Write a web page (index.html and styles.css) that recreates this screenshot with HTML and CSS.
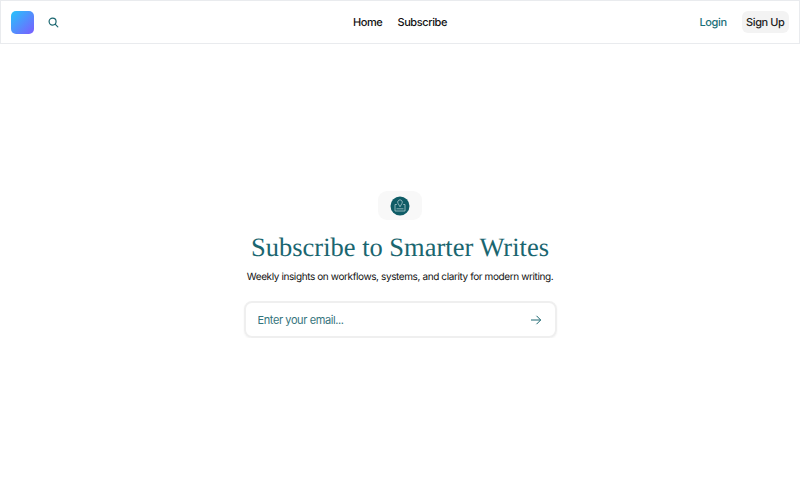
FILE: index.html
```html
<!DOCTYPE html>
<html lang="en">
  <head>
    <meta charset="UTF-8" />
    <meta name="viewport" content="width=device-width, initial-scale=1.0" />
    <title>Subscribe to Smarter Writes</title>
    <link rel="stylesheet" href="styles.css">
  </head>
  <body>
    <header class="navbar">
      <div class="nav-left">
        <a class="logo" href="#" aria-label="Home"></a>
        <button class="search-btn" type="button" aria-label="Search">
          <svg width="11" height="11" viewBox="0 0 12 12" fill="none" stroke="currentColor" stroke-width="1.3" stroke-linecap="round">
            <circle cx="5" cy="5" r="3.8" />
            <path d="M8 8l2.700 2.700" />
          </svg>
        </button>
      </div>
      <nav class="nav-links">
        <a href="#">Home</a>
        <a href="#">Subscribe</a>
      </nav>
      <div class="nav-right">
        <a class="login" href="#">Login</a>
        <a class="signup" href="#">Sign Up</a>
      </div>
    </header>

    <main class="hero">
      <div class="badge">
        <svg width="20" height="20" viewBox="0 0 20 20" fill="none" stroke="#a9c8cc" stroke-width="0.8">
          <circle cx="10" cy="10" r="9.5" fill="#0f5c66" stroke="none" />
          <path d="M6.800 8.500H5v6.500h10V8.500h-1.800" />
          <path d="M10 10.800 8 7.300a2.300 2.300 0 1 1 4 0z" />
          <path d="M6.500 12.800h7" />
        </svg>
      </div>
      <h1>Subscribe to Smarter Writes</h1>
      <p class="subtitle">Weekly insights on workflows, systems, and clarity for modern writing.</p>
      <form class="subscribe-form">
        <input type="email" placeholder="Enter your email..." />
        <button type="submit" aria-label="Subscribe">
          <svg width="12" height="12" viewBox="0 0 12 12" fill="none" stroke="currentColor" stroke-width="1">
            <path d="M1 6h9.500M6.500 1.800 10.700 6l-4.200 4.200" />
          </svg>
        </button>
      </form>
    </main>
  </body>
</html>
```

FILE: styles.css
```css
* {
  box-sizing: border-box;
}
body {
  margin: 0;
  font-family: Inter, sans-serif;
  background-color: #fff;
  text-rendering: geometricPrecision;
}
a {
  text-decoration: none;
}
.navbar {
  height: 44px;
  padding: 0 10px;
  border: 1px solid #e9ebee;
  display: grid;
  grid-template-columns: 1fr auto 1fr;
  align-items: center;
}
.nav-left {
  display: flex;
  align-items: center;
  gap: 14px;
}
.logo {
  width: 23px;
  height: 23px;
  border-radius: 5px;
  background: linear-gradient(135deg, #25c4fb, #7c5cff);
}
.search-btn {
  padding: 0;
  border: none;
  background: none;
  color: #1a6670;
  display: flex;
}
.nav-links {
  display: flex;
  gap: 15px;
}
.nav-links a {
  color: #111;
  font-size: 11px;
  font-weight: 500;
  letter-spacing: -0.4px;
}
.nav-right {
  display: flex;
  justify-content: flex-end;
  align-items: center;
  gap: 15px;
}
.login {
  color: #1a6f79;
  font-size: 11px;
  font-weight: 500;
  letter-spacing: -0.4px;
}
.signup {
  padding: 4px 4.500px;
  border-radius: 6px;
  background-color: #f3f3f3;
  color: #222;
  font-size: 11px;
  font-weight: 500;
  letter-spacing: -0.4px;
}
.hero {
  display: flex;
  flex-direction: column;
  align-items: center;
  padding-top: 147px;
}
.badge {
  width: 44px;
  height: 29px;
  border-radius: 9px;
  background-color: #f8f8f8;
  display: flex;
  align-items: center;
  justify-content: center;
}
h1 {
  margin: 10px 0 0;
  color: #1a6670;
  font-family: "Liberation Serif", serif;
  font-size: 26.500px;
  font-weight: 400;
  line-height: 34px;
}
.subtitle {
  margin: 5px 0 0;
  color: #111;
  font-size: 10px;
  letter-spacing: -0.39px;
  line-height: 16px;
}
.subscribe-form {
  width: 313px;
  height: 37px;
  margin-top: 16px;
  padding: 0 12.500px 0 12px;
  border: 2px solid #efefef;
  border-radius: 8px;
  box-shadow: 0 1px 2px rgba(0, 0, 0, 0.05);
  display: flex;
  align-items: center;
}
.subscribe-form input {
  flex: 1;
  padding: 0;
  border: none;
  outline: none;
  font-family: inherit;
  font-size: 11px;
  letter-spacing: -0.4px;
  color: #1a6670;
}
.subscribe-form input::placeholder {
  color: #1a6670;
  opacity: 0.9;
}
.subscribe-form button {
  padding: 0;
  border: none;
  background: none;
  color: #1a6670;
  display: flex;
}
```
